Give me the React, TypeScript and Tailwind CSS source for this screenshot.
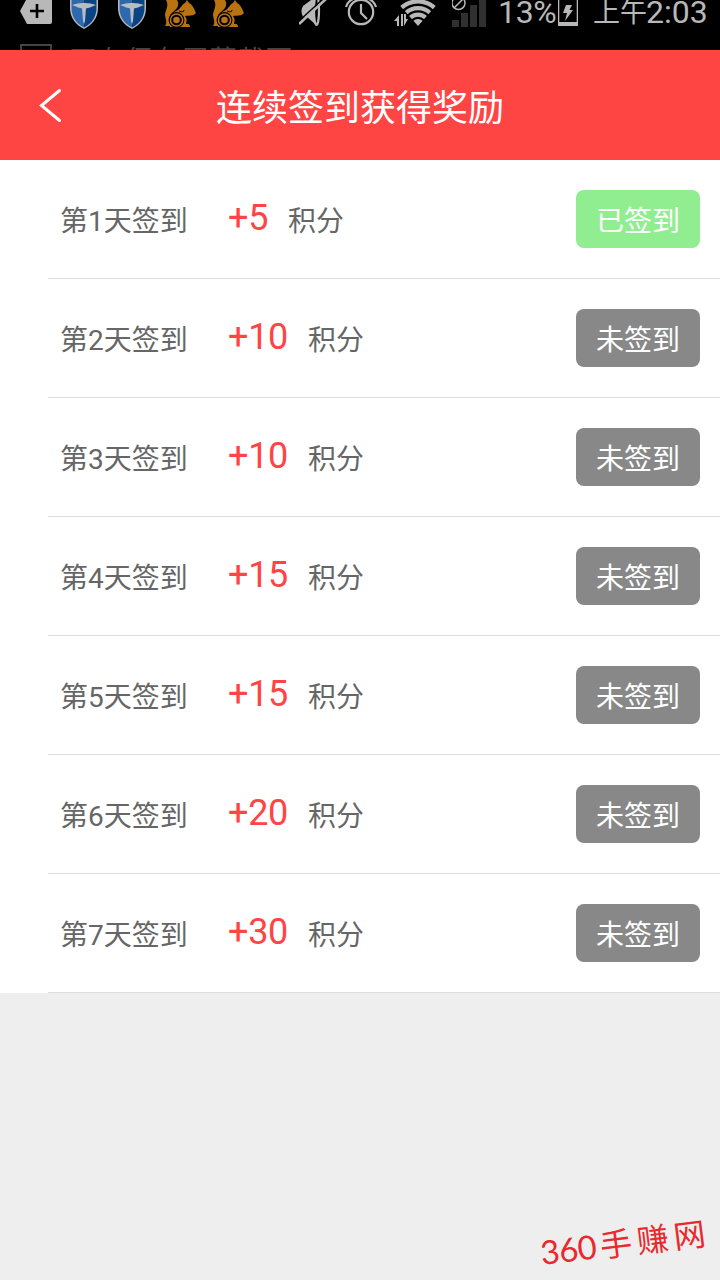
type Day = { day: number; points: number; signed: boolean };

const days: Day[] = [
  { day: 1, points: 5, signed: true },
  { day: 2, points: 10, signed: false },
  { day: 3, points: 10, signed: false },
  { day: 4, points: 15, signed: false },
  { day: 5, points: 15, signed: false },
  { day: 6, points: 20, signed: false },
  { day: 7, points: 30, signed: false },
];

function ShieldIcon() {
  return (
    <svg className="h-[30px] w-[30px] shrink-0" viewBox="0 0 30 30">
      <path d="M1 0H29V8C29 18 23 25 15 29C7 25 1 18 1 8Z" fill="#b8bcc0" />
      <path d="M2.5 0H15V27.5C7.5 24 2.5 17 2.5 8Z" fill="#2c69ae" />
      <path d="M27.5 0H15V27.5C22.5 24 27.5 17 27.5 8Z" fill="#0b4484" />
      <path d="M3 5Q9 2.8 15 3Q21 2.8 27 5Q20 8 17 8.5L16 21L15 24L14 21L13 8.5Q10 8 3 5Z" fill="#b9bcc0" />
    </svg>
  );
}

function SquirrelIcon() {
  return (
    <svg className="h-[28px] w-[32px] shrink-0" viewBox="0 0 32 28" fill="#b9730f">
      <path d="M2 0H13C16 5 13 9 9 12C5 15 4 20 7 26H1C4 22 1 19 1 14C2 9 5 5 2 0Z" />
      <path d="M12 11C17 9 17 5 21 3L23 0L25 3C29 5 30 9 32 13C29 17 24 15 21 16C24 20 22 22 22 24Q25 23 26 26V27H6C4 19 7 14 12 11Z" />
      <circle cx="12.5" cy="20" r="7.4" fill="none" stroke="#000" strokeWidth="1.1" />
      <circle cx="12.5" cy="20" r="4.3" fill="none" stroke="#000" strokeWidth="2" />
      <path d="M15 11Q20 13 20 10" fill="none" stroke="#000" strokeWidth="1" />
    </svg>
  );
}

function StatusBar() {
  return (
    <div className="h-[50px] overflow-hidden bg-black font-['Roboto','Noto_Sans_CJK_SC',sans-serif] text-[#b8b8b8]">
      <div className="flex h-[42px] items-start">
        <svg className="ml-5 h-6 w-8 shrink-0" viewBox="0 0 32 24">
          <path d="M6 0H32V22Q32 24 30 24H7L0 11Z" fill="#b8b8b8" />
          <path d="M17 4V18M10 11H24" stroke="#000" strokeWidth="2.6" />
        </svg>
        <div className="ml-[17px] flex gap-[18px]">
          <ShieldIcon />
          <ShieldIcon />
        </div>
        <div className="ml-[17px] flex gap-4">
          <SquirrelIcon />
          <SquirrelIcon />
        </div>
        <svg className="ml-[55px] h-[27px] w-[29px] shrink-0" viewBox="0 0 29 27">
          <path d="M4 6L12 0H16V24L8 17H4Q1 11 4 6Z" fill="#b8b8b8" />
          <ellipse cx="17.5" cy="10" rx="2.5" ry="15" fill="#000" stroke="#b8b8b8" strokeWidth="2.2" />
          <path d="M0 21L23 0" stroke="#000" strokeWidth="1.5" />
          <path d="M0 24L27 -1" stroke="#b8b8b8" strokeWidth="2.5" />
        </svg>
        <svg className="ml-[17px] h-[27px] w-8 shrink-0" viewBox="0 0 32 27" fill="none" stroke="#b8b8b8">
          <circle cx="16" cy="12" r="12.2" strokeWidth="2.2" />
          <path d="M16 4V13L22 19" strokeWidth="2.2" />
          <path d="M1 7Q3 1 8 -1M31 7Q29 1 24 -1" strokeWidth="2.2" />
        </svg>
        <svg className="ml-[17px] h-[27px] w-[45px] shrink-0" viewBox="0 0 45 27">
          <clipPath id="wifi">
            <path d="M24 26L1 0H47Z" />
          </clipPath>
          <g clipPath="url(#wifi)">
            <circle cx="24" cy="26" r="7" fill="#b8b8b8" />
            <g fill="none" stroke="#b8b8b8" strokeWidth="4.2">
              <circle cx="24" cy="26" r="11.4" />
              <circle cx="24" cy="26" r="17.8" />
              <circle cx="24" cy="26" r="24.6" />
            </g>
          </g>
          <path d="M0 21L5 15V26H3V21ZM7 14H9V26H7ZM10 14H12V19H14L10 26Z" fill="#b8b8b8" />
        </svg>
        <svg className="ml-[13px] h-[27px] w-[35px] shrink-0" viewBox="0 0 35 27">
          <path d="M0 20H7V27H0ZM9 13H16V27H9ZM18 5H25V27H18ZM27 0H34V27H27Z" fill="#303030" />
          <circle cx="6.5" cy="3" r="6.5" fill="none" stroke="#b8b8b8" strokeWidth="1.5" />
          <path d="M2 8L11 -1" stroke="#b8b8b8" strokeWidth="1.5" />
        </svg>
        <span className="-mt-[7px] ml-[11px] w-[60px] shrink-0 text-[32px] leading-[38px] tracking-[-0.3px]">13%</span>
        <svg className="h-[26px] w-5 shrink-0" viewBox="0 0 20 26">
          <path d="M0 0H1.3V22H18.7V0H20V26H0Z" fill="#b8b8b8" />
          <path d="M8 5H14L11.5 10H15L7 21L9 13H5Z" fill="#b8b8b8" />
        </svg>
        <div className="-mt-[7px] ml-[15px] flex shrink-0 text-[32px] leading-[38px] whitespace-nowrap">
          <span className="mt-[1px] w-[53px] text-[27px]">上午</span>
          <span>2:03</span>
        </div>
      </div>
      <div className="flex pt-[2px] text-[#444]">
        <span className="ml-5 h-7 w-8 border-2 border-[#444]" />
        <span className="ml-[17px] pt-[4px] text-[28px] leading-7">正在保存屏幕截图</span>
      </div>
    </div>
  );
}

function DayRow({ day, points, signed }: Day) {
  return (
    <li className="ml-12 flex h-[119px] items-center border-b border-[#ddd] pr-5 pl-3 text-[28px] text-[#666]">
      <span className="w-[168px] pt-[6px] whitespace-nowrap">第{day}天签到</span>
      <span className="-mt-[2px] text-[36px] tracking-[-0.3px] text-[#ff4444]">+{points}</span>
      <span className="ml-5 pt-[6px]">积分</span>
      <span
        className={`ml-auto flex h-[58px] w-[124px] items-center justify-center rounded-lg pt-[6px] text-white ${
          signed ? 'bg-[#90ee90]' : 'bg-[#888]'
        }`}
      >
        {signed ? '已签到' : '未签到'}
      </span>
    </li>
  );
}

export default function App() {
  return (
    <div className="relative h-[1280px] w-[720px] overflow-hidden bg-[#eee] font-['Roboto','Noto_Sans_CJK_SC',sans-serif]">
      <StatusBar />
      <header className="flex h-[110px] items-center bg-[#ff4444] text-white">
        <button className="ml-[38px] w-6" aria-label="返回">
          <svg className="h-9 w-6" viewBox="0 0 24 36" fill="none" stroke="currentColor" strokeWidth="3" strokeLinecap="round">
            <path d="M21.5 3.5L3.5 18.5L21.5 33.5" />
          </svg>
        </button>
        <h1 className="mr-[62px] flex-1 pt-[7px] text-center text-[36px] leading-[54px]">连续签到获得奖励</h1>
      </header>
      <ul className="bg-white">
        {days.map((d) => (
          <DayRow key={d.day} {...d} />
        ))}
      </ul>
      <div className="absolute right-[14px] bottom-[16px] flex -rotate-[7deg] items-baseline text-[#e8292d]">
        <span className="font-['Lato',sans-serif] text-[33px] leading-10 tracking-[-0.5px]">360</span>
        <span className="ml-1 flex gap-[5px] text-[32px] leading-10">
          <span>手</span>
          <span>赚</span>
          <span>网</span>
        </span>
      </div>
    </div>
  );
}
